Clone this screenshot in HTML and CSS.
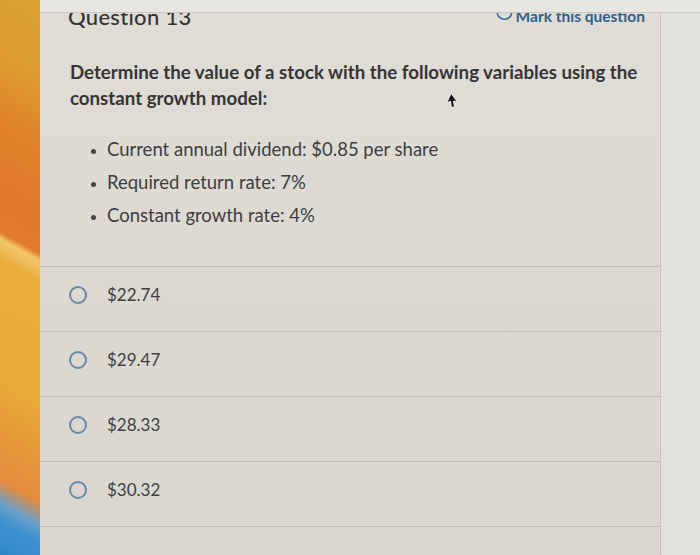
FILE: index.html
```html
<!DOCTYPE html>
<html>
<head>
<meta charset="utf-8">
<link rel="stylesheet" href="styles.css">
</head>
<body>
<div class="screen">
  <div class="wallpaper"></div>
  <div class="window">
    <div class="topbar"></div>
    <div class="body">
      <main class="panel">
        <div class="heading">
          <h2 class="title">Question 13</h2>
          <a class="mark"><svg class="mark-icon" width="17" height="14" viewBox="0 0 17 14"><circle cx="8.5" cy="4" r="7.3" fill="none" stroke="#3b6f9e" stroke-width="1.6"/></svg>Mark this question</a>
        </div>
        <div class="prompt">
          <p class="stem">Determine the value of a stock with the following variables using the constant growth model:</p>
          <ul class="facts">
            <li>Current annual dividend: $0.85 per share</li>
            <li>Required return rate: 7%</li>
            <li>Constant growth rate: 4%</li>
          </ul>
          <svg class="cursor" width="12" height="15" viewBox="0 0 12 15"><path d="M5 0.5 L11.2 8.5 L7.4 8 L8.4 14 L5.4 14.3 L4.6 8.3 L1 9.6 Z" fill="#111" stroke="#fff" stroke-width="0.8"/></svg>
        </div>
        <ul class="options">
          <li class="option"><span class="radio"></span><span>$22.74</span></li>
          <li class="option"><span class="radio"></span><span>$29.47</span></li>
          <li class="option"><span class="radio"></span><span>$28.33</span></li>
          <li class="option"><span class="radio"></span><span>$30.32</span></li>
          <li class="option empty"></li>
        </ul>
      </main>
      <aside class="side"></aside>
    </div>
  </div>
</div>
</body>
</html>
```

FILE: styles.css
```css
html, body {
  margin: 0;
  padding: 0;
  height: 100%;
  overflow: hidden;
}
body {
  font-family: "Lato", "Open Sans", "Liberation Sans", sans-serif;
  background: #dedbd5;
}
.screen {
  display: flex;
  width: 700px;
  height: 555px;
  overflow: hidden;
}
.wallpaper {
  width: 40px;
  flex: none;
  background: linear-gradient(209deg,
    #d9a233 0%,
    #dd9a30 14%,
    #e0842b 24%,
    #e0782a 38%,
    #e27b2b 44%,
    #f1c565 45.2%,
    #f0c060 46.6%,
    #e9ad3c 48.5%,
    #e8a939 70%,
    #e69a38 78%,
    #e48b3e 87%,
    #6aa0c8 91%,
    #3d92d2 94%,
    #2f87cb 100%);
}
.window {
  flex: 1;
  display: flex;
  flex-direction: column;
  min-width: 0;
}
.topbar {
  height: 12px;
  flex: none;
  background: #e8e6e1;
  border-bottom: 1px solid #c9c6c0;
}
.body {
  flex: 1;
  display: flex;
  min-height: 0;
}
.panel {
  width: 620px;
  flex: none;
  background: linear-gradient(180deg, #e0ddd7 0%, #dcd9d3 50%, #dad7d0 100%);
  border-right: 1px solid #c5c2bc;
  overflow: hidden;
}
.side {
  flex: 1;
  background: #e4e2dd;
}
.heading {
  height: 17px;
  overflow: hidden;
  display: flex;
  align-items: flex-end;
  justify-content: space-between;
  padding: 0 15px 0 28px;
}
.title {
  margin: 0 0 2px;
  font-size: 22px;
  line-height: 22px;
  font-weight: 500;
  color: #333;
  letter-spacing: 0.3px;
}
.mark {
  display: flex;
  align-items: flex-end;
  gap: 3px;
  font-size: 15.5px;
  line-height: 18px;
  font-weight: 700;
  color: #2f5f8a;
  margin-bottom: 5px;
}
.mark-icon {
  flex: none;
  margin-bottom: 3px;
}
.prompt {
  position: relative;
  padding: 29px 0 34px 30px;
  border-bottom: 1px solid #c3c0ba;
}
.cursor {
  position: absolute;
  left: 406px;
  top: 63px;
}
.stem {
  margin: 0;
  width: 595px;
  font-size: 18.7px;
  line-height: 26px;
  font-weight: 700;
  color: #353535;
}
.facts {
  margin: 22px 0 0;
  padding: 0 0 0 37px;
  font-size: 18.5px;
  line-height: 33px;
  color: #3e3e3e;
}
.facts li::marker {
  font-size: 14px;
  color: #444;
}
.options {
  list-style: none;
  margin: 0;
  padding: 0;
}
.option {
  height: 65px;
  box-sizing: border-box;
  border-bottom: 1px solid #c3c0ba;
  display: flex;
  align-items: center;
  gap: 20px;
  padding: 0 0 9px 29px;
  font-size: 17px;
  color: #404040;
}
.radio {
  width: 14px;
  height: 14px;
  border: 2px solid #6888a8;
  border-radius: 50%;
  flex: none;
}
```
